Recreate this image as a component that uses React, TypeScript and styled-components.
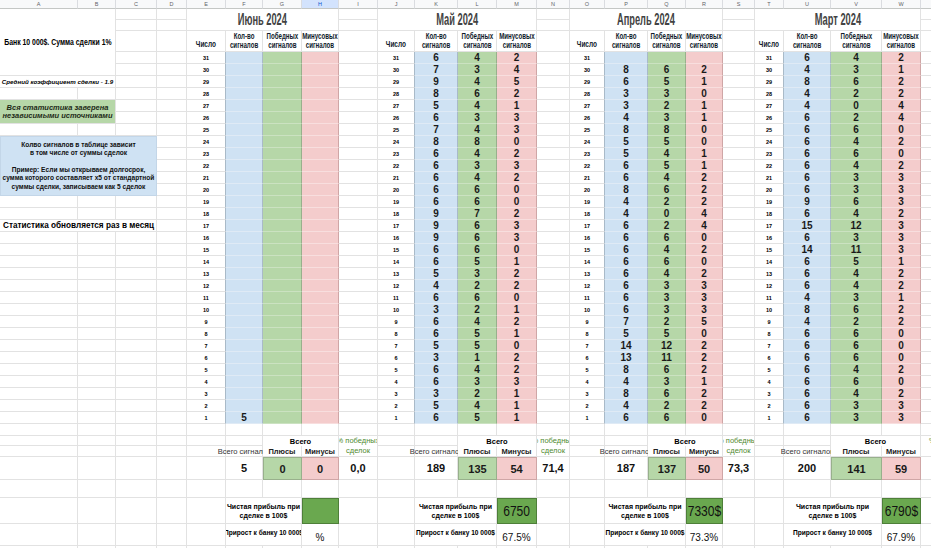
import React from "react";
import styled, { createGlobalStyle, css } from "styled-components";

const COLS = [78, 38, 41, 30, 39, 37, 39, 37, 39, 37, 43, 39, 40, 33, 35, 43, 38, 37, 32, 29, 47, 51, 39, 60];
const LETTERS = "ABCDEFGHIJKLMNOPQRSTUVWX".split("");
const ROWS = [9, 11, 11, 21, ...Array(31).fill(12), 12, 10, 11, 23, 18, 26, 22, 12];
const SHEET_ROWS = ROWS.length - 1;

const SANS = `"Liberation Sans", Arial, sans-serif`;

const GRID = "#e2e2e2";
type Tone = "blue" | "green" | "red";
const TONE: Record<Tone, { bg: string; side: string; line: string }> = {
  blue: { bg: "#cfe2f3", side: "#a9bac8", line: "#dfeaf5" },
  green: { bg: "#b6d7a8", side: "#98b08c", line: "#cbe2c1" },
  red: { bg: "#f4cccc", side: "#cfa6a6", line: "#f8dede" },
};

const GlobalStyle = createGlobalStyle`
  html, body { margin: 0; padding: 0; overflow: hidden; background: #fff; }
  body { font-family: ${SANS}; color: #000; }
`;

type Pos = { $r: number; $c: number; $rs?: number; $cs?: number };
const place = css<Pos>`
  grid-row: ${(p) => p.$r + 1} / span ${(p) => p.$rs ?? 1};
  grid-column: ${(p) => p.$c} / span ${(p) => p.$cs ?? 1};
  box-sizing: border-box;
  min-width: 0;
  min-height: 0;
`;

const Sheet = styled.div`
  display: grid;
  grid-template-columns: ${COLS.map((w) => `${w}px`).join(" ")};
  grid-template-rows: ${ROWS.map((h) => `${h}px`).join(" ")};
  width: max-content;
`;

/* condensed text: the narrow sheet fonts are emulated by a horizontal squeeze */
const Narrow = styled.span<{ $sx: number }>`
  display: inline-block;
  flex: none;
  white-space: nowrap;
  transform: scaleX(${(p) => p.$sx});
  transform-origin: center;
`;

const ColHead = styled.div<{ $c: number; $selected?: boolean }>`
  grid-row: 1;
  grid-column: ${(p) => p.$c};
  box-sizing: border-box;
  border-right: 1px solid #dadce0;
  border-bottom: 1px solid #c4c7c5;
  background: ${(p) => (p.$selected ? "#d3e3fd" : "#f8f9fa")};
  color: ${(p) => (p.$selected ? "#0b57d0" : "#5f6368")};
  font: 5.5px ${SANS};
  display: flex;
  align-items: center;
  justify-content: center;
  overflow: hidden;
`;

const BaseCell = styled.div<Pos>`
  ${place};
  border-right: 1px solid ${GRID};
  border-bottom: 1px solid ${GRID};
  background: #fff;
`;

const Plain = styled.div<Pos>`
  ${place};
  background: #fff;
  border-right: 1px solid ${GRID};
  border-bottom: 1px solid ${GRID};
  display: flex;
  align-items: center;
  justify-content: center;
  text-align: center;
  overflow: hidden;
`;

const BankNote = styled(Plain)`
  font: bold 8.2px ${SANS};
  color: #000;
`;

const AvgNote = styled(Plain)`
  font: italic bold 6.2px ${SANS};
  white-space: nowrap;
`;

const Verified = styled(Plain)`
  background: #b6d7a8;
  font: italic bold 7.5px/8px ${SANS};
  color: #1d2a17;
`;

const InfoBox = styled(Plain)`
  background: #cfe2f3;
  border: 1px solid #c3d6e8;
  font: bold 6.6px/8.3px ${SANS};
  color: #111;
`;

const StatNote = styled(Plain)`
  justify-content: flex-start;
  padding-left: 3px;
  font: bold 8.2px ${SANS};
  white-space: nowrap;
`;

const Title = styled(Plain)`
  font: bold 16px ${SANS};
  color: #434343;
`;

const HeadLabel = styled(Plain)<{ $low?: boolean }>`
  font: bold 8.3px/8.8px ${SANS};
  color: #0f1a2a;
  overflow: visible;
  ${(p) =>
    p.$low &&
    css`
      align-items: flex-end;
      padding-bottom: 2px;
    `}
`;

const DayCell = styled(Plain)`
  font: bold 5.5px ${SANS};
  border-right-color: ${TONE.blue.side};
`;

const FillCell = styled.div<Pos & { $tone: Tone }>`
  ${place};
  background: ${(p) => TONE[p.$tone].bg};
  border-right: 1px solid ${(p) => TONE[p.$tone].side};
  border-bottom: 1px solid ${(p) => TONE[p.$tone].line};
  display: flex;
  align-items: center;
  justify-content: center;
  font: bold 10px ${SANS};
  color: #1a1a1a;
`;

const Overall = styled(Plain)`
  font: bold 7.5px ${SANS};
  border-bottom: none;
`;

const SubHead = styled(Plain)<{ $bold?: boolean }>`
  font: ${(p) => (p.$bold ? "bold" : "normal")} 7.5px ${SANS};
  color: #222;
  white-space: nowrap;
`;

const ClipWrap = styled(Plain)`
  justify-content: flex-end;
  background: transparent;
  border: none;
`;

const ClipInner = styled.span<{ $w: number }>`
  width: ${(p) => p.$w}px;
  flex: none;
  display: flex;
  justify-content: center;
  white-space: nowrap;
  font: 7.5px ${SANS};
  color: #333;
`;

const WinLabel = styled(Plain)`
  font: 7.5px/10px ${SANS};
  color: #4f8a2f;
  white-space: nowrap;
`;

const TotalValue = styled(Plain)`
  font: bold 11px ${SANS};
  color: #111;
`;

const TotalFill = styled(FillCell)`
  font-size: 11px;
  border-top: 1px solid ${(p) => TONE[p.$tone].side};
  border-bottom: 1px solid ${(p) => TONE[p.$tone].side};
  ${(p) => p.$tone === "green" && css`border-left: 1px solid ${TONE.green.side};`}
`;

const ProfitLabel = styled(Plain)<{ $top?: boolean }>`
  font: bold 7px/9px ${SANS};
  white-space: nowrap;
  ${(p) =>
    p.$top &&
    css`
      align-items: flex-start;
      padding-top: 4px;
      font-size: 6.6px;
    `}
`;

const ProfitBox = styled(Plain)`
  background: #6aa84f;
  border: 1px solid #4e7f39;
  font: 14px ${SANS};
  color: #121212;
`;

const Growth = styled(Plain)`
  align-items: flex-end;
  padding-bottom: 2px;
  font: 10px ${SANS};
  color: #111;
`;

type Row = [number, number, number] | null;
type Month = {
  title: string;
  col: number;
  rows: Row[];
  total: [string, string, string];
  win: string;
  profit: string;
  growth: string;
};

const parse = (s: string): Row[] =>
  s.split(",").map((t) => {
    const v = t.trim();
    if (!v) return null;
    const [a, b, c] = v.split(" ").map(Number);
    return [a, b, c];
  });

const MONTHS: Month[] = [
  {
    title: "Июнь 2024",
    col: 5,
    rows: Array(31).fill(null),
    total: ["5", "0", "0"],
    win: "0,0",
    profit: "",
    growth: "%",
  },
  {
    title: "Май 2024",
    col: 10,
    rows: parse(
      "6 4 2,7 3 4,9 4 5,8 6 2,5 4 1,6 3 3,7 4 3,8 8 0,6 4 2,6 3 3,6 4 2,6 6 0,6 6 0,9 7 2,9 6 3,9 6 3,6 6 0,6 5 1,5 3 2,4 2 2,6 6 0,3 2 1,6 4 2,6 5 1,5 5 0,3 1 2,6 4 2,6 3 3,3 2 1,5 4 1,6 5 1"
    ),
    total: ["189", "135", "54"],
    win: "71,4",
    profit: "6750",
    growth: "67.5%",
  },
  {
    title: "Апрель 2024",
    col: 15,
    rows: parse(
      ",8 6 2,6 5 1,3 3 0,3 2 1,4 3 1,8 8 0,5 5 0,5 4 1,6 5 1,6 4 2,8 6 2,4 2 2,4 0 4,6 2 4,6 6 0,6 4 2,6 6 0,6 4 2,6 3 3,6 3 3,6 3 3,7 2 5,5 5 0,14 12 2,13 11 2,8 6 2,4 3 1,8 6 2,4 2 2,6 6 0"
    ),
    total: ["187", "137", "50"],
    win: "73,3",
    profit: "7330$",
    growth: "73.3%",
  },
  {
    title: "Март 2024",
    col: 20,
    rows: parse(
      "6 4 2,4 3 1,8 6 2,4 2 2,4 0 4,6 2 4,6 6 0,6 4 2,6 6 0,6 4 2,6 3 3,6 3 3,9 6 3,6 4 2,15 12 3,6 3 3,14 11 3,6 5 1,6 4 2,6 4 2,4 3 1,8 6 2,4 2 2,6 6 0,6 6 0,6 6 0,6 4 2,6 6 0,6 4 2,6 3 3,6 3 3"
    ),
    total: ["200", "141", "59"],
    win: "70,5",
    profit: "6790$",
    growth: "67.9%",
  },
];

function MonthTable({ m }: { m: Month }) {
  const c = m.col;
  return (
    <>
      <Title $r={1} $rs={2} $c={c} $cs={4}>
        <Narrow $sx={0.58}>{m.title}</Narrow>
      </Title>
      <HeadLabel $r={3} $c={c} $low>
        <Narrow $sx={0.78}>Число</Narrow>
      </HeadLabel>
      <HeadLabel $r={3} $c={c + 1}>
        <Narrow $sx={0.74}>
          Кол-во
          <br />
          сигналов
        </Narrow>
      </HeadLabel>
      <HeadLabel $r={3} $c={c + 2}>
        <Narrow $sx={0.74}>
          Победных
          <br />
          сигналов
        </Narrow>
      </HeadLabel>
      <HeadLabel $r={3} $c={c + 3}>
        <Narrow $sx={0.74}>
          Минусовых
          <br />
          сигналов
        </Narrow>
      </HeadLabel>
      {m.rows.map((row, i) => {
        const r = 4 + i;
        const june = m.col === 5 && i === 30;
        return (
          <React.Fragment key={i}>
            <DayCell $r={r} $c={c}>
              {31 - i}
            </DayCell>
            <FillCell $r={r} $c={c + 1} $tone="blue">
              {june ? 5 : row ? row[0] : ""}
            </FillCell>
            <FillCell $r={r} $c={c + 2} $tone="green">
              {row ? row[1] : ""}
            </FillCell>
            <FillCell $r={r} $c={c + 3} $tone="red">
              {row ? row[2] : ""}
            </FillCell>
          </React.Fragment>
        );
      })}
      <Overall $r={36} $c={c + 2} $cs={2}>
        Всего
      </Overall>
      <ClipWrap $r={37} $c={c} $cs={2}>
        <ClipInner $w={COLS[c]}>Всего сигналов</ClipInner>
      </ClipWrap>
      <SubHead $r={37} $c={c + 2} $bold>
        Плюсы
      </SubHead>
      <SubHead $r={37} $c={c + 3} $bold>
        Минусы
      </SubHead>
      <WinLabel $r={36} $rs={2} $c={c + 4}>
        % победных
        <br />
        сделок
      </WinLabel>
      <TotalValue $r={38} $c={c + 1}>
        {m.total[0]}
      </TotalValue>
      <TotalFill $r={38} $c={c + 2} $tone="green">
        {m.total[1]}
      </TotalFill>
      <TotalFill $r={38} $c={c + 3} $tone="red">
        {m.total[2]}
      </TotalFill>
      <TotalValue $r={38} $c={c + 4}>
        {m.win}
      </TotalValue>
      <ProfitLabel $r={40} $c={c + 1} $cs={2}>
        Чистая прибыль при
        <br />
        сделке в 100$
      </ProfitLabel>
      <ProfitBox $r={40} $c={c + 3}>
        <Narrow $sx={0.86}>{m.profit}</Narrow>
      </ProfitBox>
      <ProfitLabel $r={41} $c={c + 1} $cs={2} $top>
        Прирост к банку 10 000$
      </ProfitLabel>
      <Growth $r={41} $c={c + 3}>
        {m.growth}
      </Growth>
    </>
  );
}

export default function App() {
  const base: React.ReactNode[] = [];
  for (let r = 1; r <= SHEET_ROWS; r++) {
    for (let c = 1; c <= COLS.length; c++) {
      base.push(<BaseCell key={`${r}-${c}`} $r={r} $c={c} />);
    }
  }
  return (
    <>
      <GlobalStyle />
      <Sheet>
        {LETTERS.map((l, i) => (
          <ColHead key={l} $c={i + 1} $selected={l === "H"}>
            {l}
          </ColHead>
        ))}
        {base}
        <BankNote $r={1} $rs={5} $c={1} $cs={2}>
          <Narrow $sx={0.84}>Банк 10 000$. Сумма сделки 1%</Narrow>
        </BankNote>
        <AvgNote $r={6} $c={1} $cs={2}>
          Средний коэффициент сделки - 1.9
        </AvgNote>
        <Verified $r={8} $rs={2} $c={1} $cs={2}>
          Вся статистика заверена
          <br />
          независимыми источниками
        </Verified>
        <InfoBox $r={11} $rs={5} $c={1} $cs={3}>
          Колво сигналов в таблице зависит
          <br />
          в том числе от суммы сделок
          <br />
          <br />
          Пример: Если мы открываем долгосрок,
          <br />
          сумма которого составляет х5 от стандартной
          <br />
          суммы сделки, записываем как 5 сделок
        </InfoBox>
        <StatNote $r={18} $c={1} $cs={3}>
          Статистика обновляется раз в месяц
        </StatNote>
        {MONTHS.map((m) => (
          <MonthTable key={m.title} m={m} />
        ))}
      </Sheet>
    </>
  );
}
